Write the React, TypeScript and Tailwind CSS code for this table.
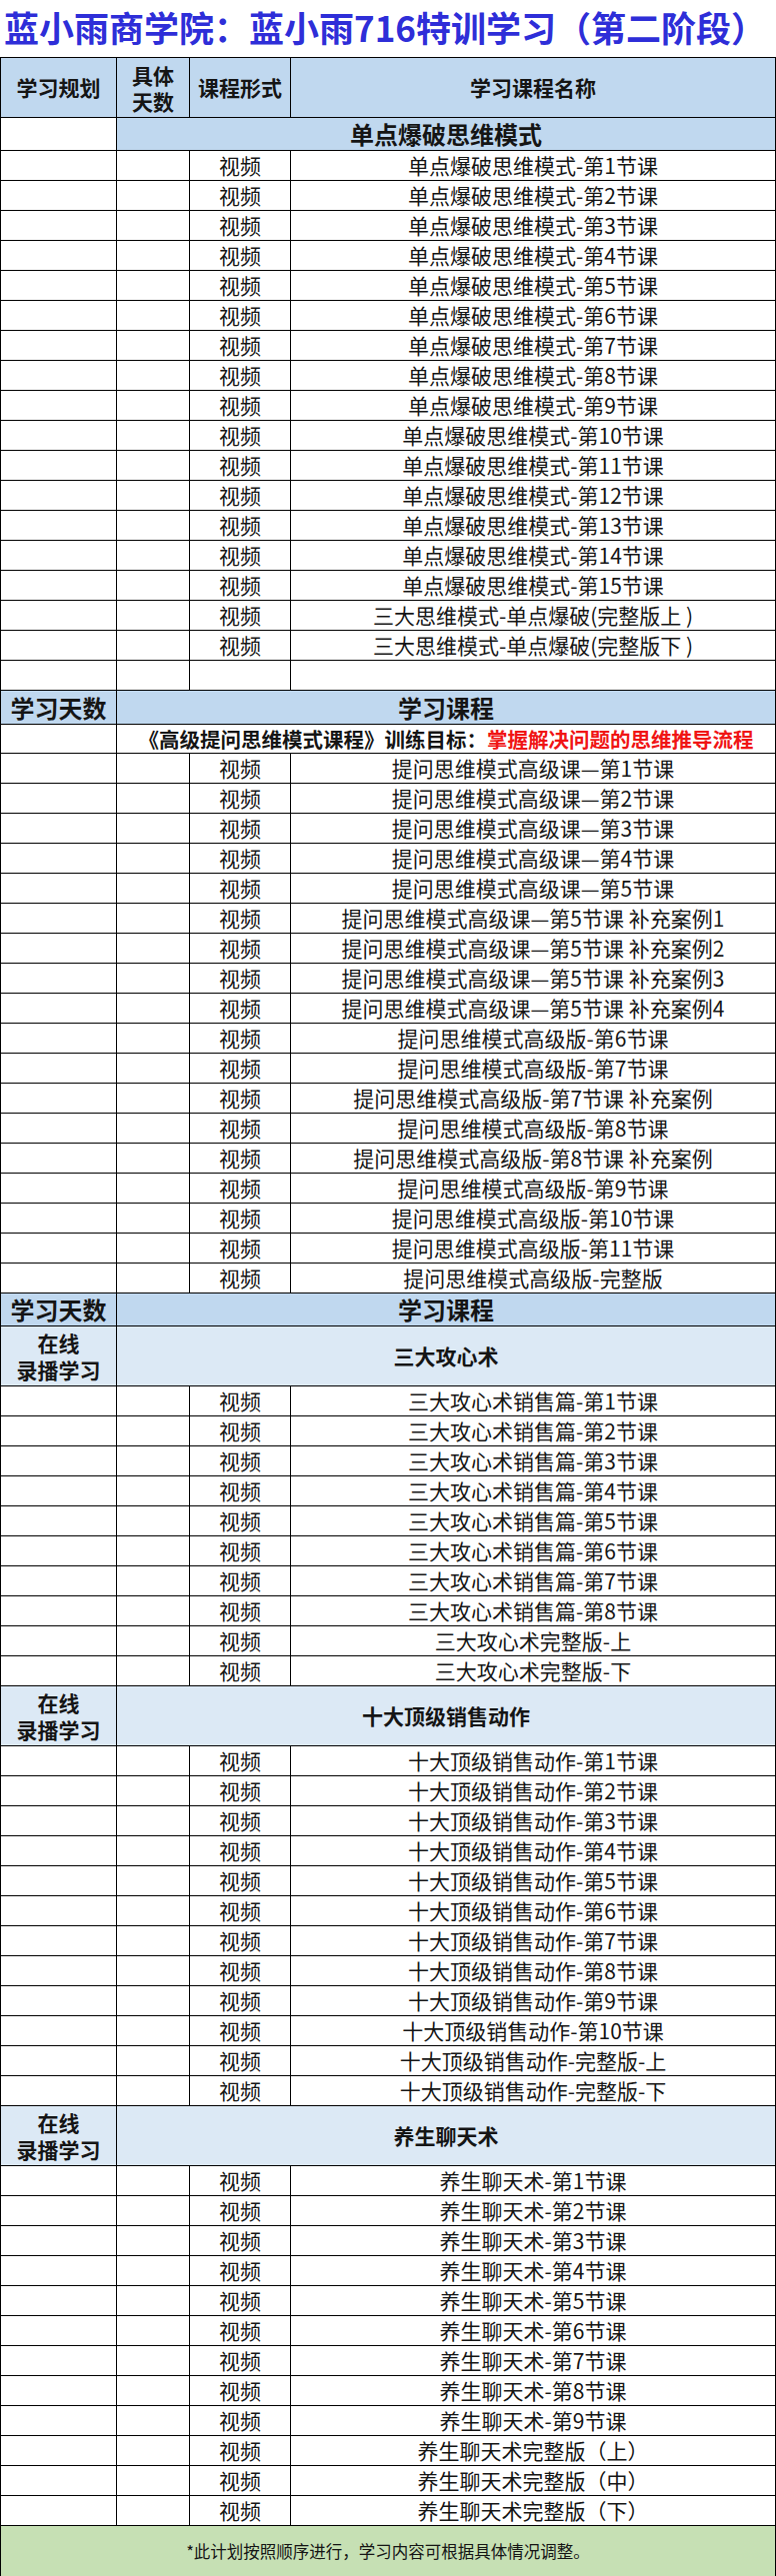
import React from "react";

type Row =
  | { kind: "lesson"; name: string }
  | { kind: "blank" }
  | { kind: "main"; left: string; right: string; leftBlue: boolean; h: string }
  | { kind: "sub"; title: string }
  | { kind: "goal" };

const FONT = "font-['Noto_Sans_CJK_SC','Liberation_Sans',sans-serif]";
const CELL = "border-r border-b border-black flex items-center justify-center text-center";

const range = (n: number) => Array.from({ length: n }, (_, i) => i + 1);

const rows: Row[] = [
  { kind: "main", left: "", right: "单点爆破思维模式", leftBlue: false, h: "h-[33px]" },
  ...range(15).map((n) => ({ kind: "lesson" as const, name: `单点爆破思维模式-第${n}节课` })),
  { kind: "lesson", name: "三大思维模式-单点爆破(完整版上 )" },
  { kind: "lesson", name: "三大思维模式-单点爆破(完整版下 )" },
  { kind: "blank" },

  { kind: "main", left: "学习天数", right: "学习课程", leftBlue: true, h: "h-[34px]" },
  { kind: "goal" },
  ...range(5).map((n) => ({ kind: "lesson" as const, name: `提问思维模式高级课—第${n}节课` })),
  ...range(4).map((n) => ({ kind: "lesson" as const, name: `提问思维模式高级课—第5节课 补充案例${n}` })),
  { kind: "lesson", name: "提问思维模式高级版-第6节课" },
  { kind: "lesson", name: "提问思维模式高级版-第7节课" },
  { kind: "lesson", name: "提问思维模式高级版-第7节课 补充案例" },
  { kind: "lesson", name: "提问思维模式高级版-第8节课" },
  { kind: "lesson", name: "提问思维模式高级版-第8节课 补充案例" },
  { kind: "lesson", name: "提问思维模式高级版-第9节课" },
  { kind: "lesson", name: "提问思维模式高级版-第10节课" },
  { kind: "lesson", name: "提问思维模式高级版-第11节课" },
  { kind: "lesson", name: "提问思维模式高级版-完整版" },

  { kind: "main", left: "学习天数", right: "学习课程", leftBlue: true, h: "h-[33px]" },
  { kind: "sub", title: "三大攻心术" },
  ...range(8).map((n) => ({ kind: "lesson" as const, name: `三大攻心术销售篇-第${n}节课` })),
  { kind: "lesson", name: "三大攻心术完整版-上" },
  { kind: "lesson", name: "三大攻心术完整版-下" },

  { kind: "sub", title: "十大顶级销售动作" },
  ...range(10).map((n) => ({ kind: "lesson" as const, name: `十大顶级销售动作-第${n}节课` })),
  { kind: "lesson", name: "十大顶级销售动作-完整版-上" },
  { kind: "lesson", name: "十大顶级销售动作-完整版-下" },

  { kind: "sub", title: "养生聊天术" },
  ...range(9).map((n) => ({ kind: "lesson" as const, name: `养生聊天术-第${n}节课` })),
  { kind: "lesson", name: "养生聊天术完整版（上）" },
  { kind: "lesson", name: "养生聊天术完整版（中）" },
  { kind: "lesson", name: "养生聊天术完整版（下）" },
];

function renderRow(row: Row, i: number) {
  switch (row.kind) {
    case "lesson":
      return (
        <React.Fragment key={i}>
          <div className={`${CELL} h-[30px]`} />
          <div className={`${CELL} h-[30px]`} />
          <div className={`${CELL} h-[30px] text-[21px] leading-none`}>视频</div>
          <div className={`${CELL} h-[30px] text-[21px] leading-none whitespace-nowrap`}>{row.name}</div>
        </React.Fragment>
      );
    case "blank":
      return (
        <React.Fragment key={i}>
          <div className={`${CELL} h-[30px]`} />
          <div className={`${CELL} h-[30px]`} />
          <div className={`${CELL} h-[30px]`} />
          <div className={`${CELL} h-[30px]`} />
        </React.Fragment>
      );
    case "main":
      return (
        <React.Fragment key={i}>
          <div
            className={`${CELL} ${row.h} text-[24px] font-bold ${row.leftBlue ? "bg-[#c0d8ef]" : "bg-white"}`}
          >
            {row.left}
          </div>
          <div className={`${CELL} ${row.h} col-span-3 bg-[#c0d8ef] text-[24px] font-bold`}>{row.right}</div>
        </React.Fragment>
      );
    case "sub":
      return (
        <React.Fragment key={i}>
          <div className={`${CELL} h-[60px] flex-col bg-[#dce9f5] text-[21px] font-bold leading-[27px]`}>
            <span>在线</span>
            <span>录播学习</span>
          </div>
          <div className={`${CELL} h-[60px] col-span-3 bg-[#dce9f5] text-[21px] font-bold`}>{row.title}</div>
        </React.Fragment>
      );
    case "goal":
      return (
        <React.Fragment key={i}>
          <div className={`${CELL} h-[29px]`} />
          <div className={`${CELL} h-[29px] col-span-3 text-[20.5px] font-bold whitespace-nowrap`}>
            《高级提问思维模式课程》训练目标：
            <span className="text-[#f01515]">掌握解决问题的思维推导流程</span>
          </div>
        </React.Fragment>
      );
  }
}

export default function App() {
  return (
    <div className={`w-[776px] bg-white text-[#151515] ${FONT}`}>
      {/* Title */}
      <div className="h-[57px] flex items-center pl-[4px] pb-[4px]">
        <h1 className="text-[35px] leading-none font-bold text-[#2e2ed8] whitespace-nowrap">
          蓝小雨商学院：蓝小雨716特训学习（第二阶段）
        </h1>
      </div>

      {/* Table */}
      <div className="grid grid-cols-[116px_73px_101px_1fr] border-l border-t border-black">
        {/* Header */}
        <div className={`${CELL} h-[60px] bg-[#c0d8ef] text-[21px] font-bold`}>学习规划</div>
        <div className={`${CELL} h-[60px] flex-col bg-[#c0d8ef] text-[21px] font-bold leading-[26px]`}>
          <span>具体</span>
          <span>天数</span>
        </div>
        <div className={`${CELL} h-[60px] bg-[#c0d8ef] text-[21px] font-bold`}>课程形式</div>
        <div className={`${CELL} h-[60px] bg-[#c0d8ef] text-[21px] font-bold`}>学习课程名称</div>

        {rows.map(renderRow)}

        {/* Footer note */}
        <div className={`${CELL} h-[51px] col-span-4 bg-[#c6e0b4] text-[16.5px]`}>
          *此计划按照顺序进行，学习内容可根据具体情况调整。
        </div>
      </div>
    </div>
  );
}
